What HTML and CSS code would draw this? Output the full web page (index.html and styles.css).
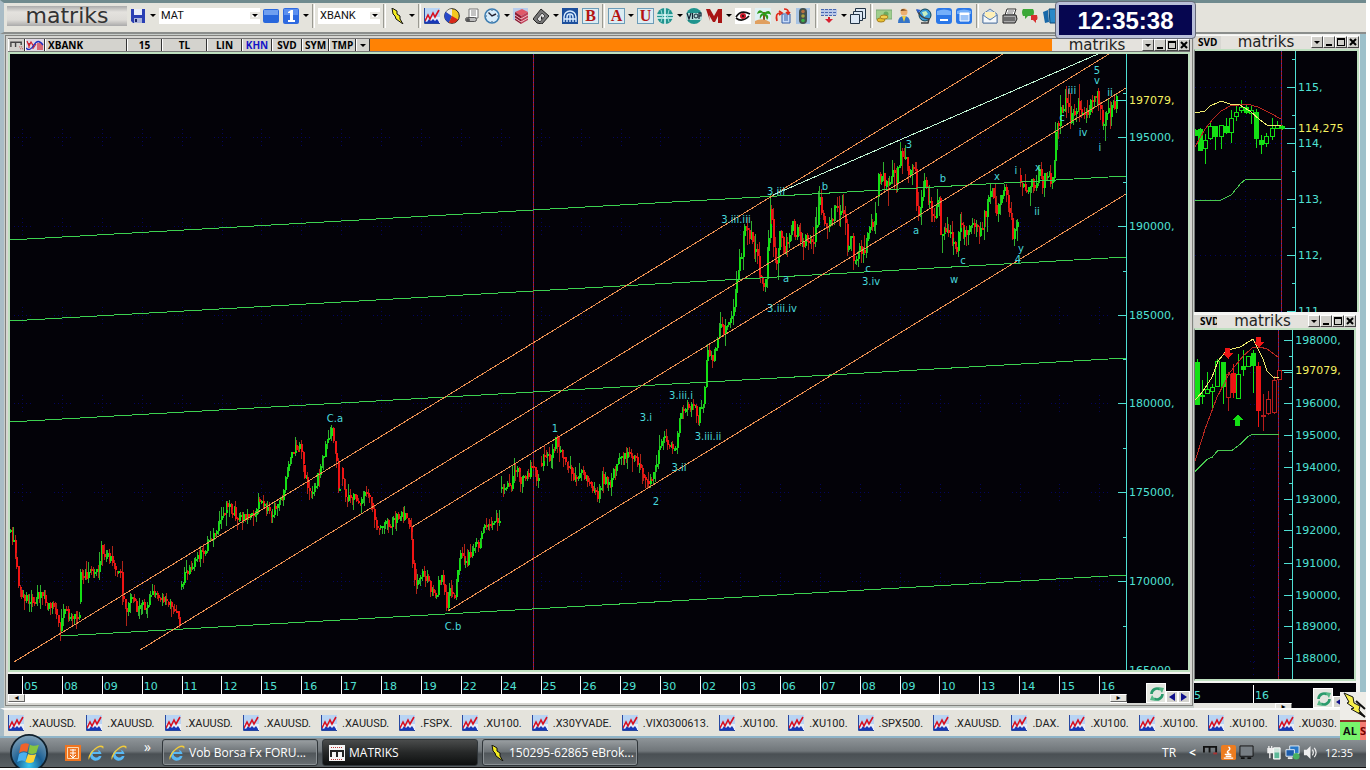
FILE: index.html
```html
<!DOCTYPE html>
<html lang="tr">
<head>
    <meta charset="UTF-8">
    <title>MATRIKS</title>
    <link rel="stylesheet" href="styles.css">
</head>
<body>

<!-- icon set -->
<svg class="defs" width="0" height="0">
    <symbol id="i-save" viewBox="0 0 16 16"><path d="M1 1h14v14H3l-2-2z" fill="#2a3fb4"/><path d="M4 1h8v6H4z" fill="#e8ecf8"/><path d="M4 10h8v5H4z" fill="#aab4dc"/><path d="M5 11h2v3H5z" fill="#1a2468"/></symbol>
    <symbol id="i-blue" viewBox="0 0 16 16"><rect y="1" width="16" height="14" rx="2" fill="#2867dc"/><path d="M1 2h14v5H1z" fill="#6f9ff0"/></symbol>
    <symbol id="i-one" viewBox="0 0 16 16"><rect width="16" height="16" rx="2" fill="#2f6ae0"/><path d="M1 1h14v6H1z" fill="#5c90f0"/><path d="M5 4l3-2h2v10h2v2H5v-2h2V5H5z" fill="#fff"/></symbol>
    <symbol id="i-bolt" viewBox="0 0 16 16"><path d="M3 0l5 3 0 3 3 2 0 3 3 5-7-5-1-3-2-2z" fill="#f4ec20" stroke="#111"/></symbol>
    <symbol id="i-chart" viewBox="0 0 16 16"><path d="M0 0h16v16H0z" fill="#b8d4f4"/><path d="M0 9h16v7H0z" fill="#e8eef8"/><path d="M1 16v-3l2 1 2-3 2 2 2-2 2 2 2-2 2 3v2z" fill="#1838b8"/><path d="M1 13l3-6 2 4 3-6 2 4 4-7" fill="none" stroke="#d81020" stroke-width="1.6"/><path d="M.5 0v15.5H16" fill="none" stroke="#2848a0"/></symbol>
    <symbol id="i-pie" viewBox="0 0 16 16"><circle cx="8" cy="8" r="7.3" fill="#f4c820" stroke="#222"/><path d="M8 8L2 3.500A7 7 0 0 0 5 14.500z" fill="#2848c8"/><path d="M8 8V1A7 7 0 0 0 2 4z" fill="#e8e8e8"/><path d="M8 8l-3 6.500a7 7 0 0 0 9-3z" fill="#d82818"/></symbol>
    <symbol id="i-fax" viewBox="0 0 16 16"><path d="M5 1h9v9H5z" fill="#fff" stroke="#777"/><path d="M7 3h5M7 5h5M7 7h5" stroke="#888"/><rect x="1.500" y="9.500" width="11" height="4" rx="2" fill="#bbb" stroke="#555"/><circle cx="4" cy="12" r="2" fill="#555"/></symbol>
    <symbol id="i-clock" viewBox="0 0 16 16"><circle cx="8" cy="8" r="7" fill="#d8ecfa" stroke="#3c7cb0" stroke-width="1.600"/><path d="M4.500 4.500L8 8l4-2" fill="none" stroke="#223" stroke-width="1.400"/><path d="M8 2v1M8 13v1M2 8h1M13 8h1" stroke="#357"/></symbol>
    <symbol id="i-books" viewBox="0 0 16 16"><path d="M0 0h15v12H0z" fill="#b8cdec"/><path d="M2 4l7-3 6 3-7 4z" fill="#e05868"/><path d="M2 4v8l6 4V8z" fill="#8a1830"/><path d="M8 8l7-4v8l-7 4z" fill="#c04058"/><path d="M2 7l6 4 7-4M2 10l6 4 7-4" fill="none" stroke="#f0c0c8"/></symbol>
    <symbol id="i-house" viewBox="0 0 16 16"><path d="M0 11L8 1l8 7-7 8-5-1z" fill="#777" stroke="#222"/><path d="M4 11l5-6 3 3-5 6z" fill="#ddd" stroke="#444"/><path d="M8 8l2 2-2 2z" fill="#222"/></symbol>
    <symbol id="i-arch" viewBox="0 0 16 16"><path d="M0 0h16v16H0z" fill="#1c4f9c"/><path d="M2 14V9a6 6 0 0 1 12 0v5M5 14V9a3 3 0 0 1 6 0v5M8 7v7M2 11h12" fill="none" stroke="#d8ecff" stroke-width="1.400"/></symbol>
    <symbol id="i-globe" viewBox="0 0 16 16"><circle cx="8" cy="8" r="8" fill="#1f948e"/><path d="M8 0v16M0 7h16M0 10h16" fill="none" stroke="#e4fafa" stroke-width="1.500"/><path d="M4 2q3 6 0 12M12 2q-3 6 0 12" fill="none" stroke="#9cdcd8"/></symbol>
    <symbol id="i-viop" viewBox="0 0 16 16"><circle cx="8" cy="8" r="8" fill="#1f948e"/><path d="M0 5h16v7H0z" fill="#b4dcd8"/><path d="M1 5l2 6 2-6M6.500 5v6M13 11V5h2v3h-2" fill="none" stroke="#123" stroke-width="1.200"/><circle cx="10" cy="8" r="2" fill="none" stroke="#123"/></symbol>
    <symbol id="i-m" viewBox="0 0 16 16"><path d="M0 1l4 0 4 7 4-7h4v14h-4V8l-3 6H7L3 7l1 6z" fill="#a81414"/></symbol>
    <symbol id="i-eye" viewBox="0 0 16 16"><path d="M0 0h16v16H0z" fill="#fff"/><path d="M1 9q5-8 14-3M1 10q6 5 13-2" fill="none" stroke="#111" stroke-width="1.700"/><circle cx="8" cy="8" r="3" fill="#c81828"/><circle cx="8" cy="8" r="1" fill="#111"/></symbol>
    <symbol id="i-palm" viewBox="0 0 16 16"><path d="M0 0h16v16H0z" fill="#dff0f4"/><path d="M9 4v8" stroke="#7c5020" stroke-width="2"/><path d="M9 5Q4-1 2 6q4-2 6-1-4 1-3 6 2-4 4-4 2 1 3 5 3-4-1-6 3-1 5 1Q15 0 9 5z" fill="#2c9a18"/><path d="M0 13q7-4 15 1v2H0z" fill="#e0a060"/></symbol>
    <symbol id="i-swap" viewBox="0 0 16 16"><path d="M7 6h8v9H7z" fill="#c8dcf8" stroke="#345fa8"/><path d="M9 8h4M9 10h4M9 12h4" stroke="#345fa8"/><path d="M2 13Q0 5 5 5M4 3l3 2-3 2M9 1q5 0 4 4M11 4l2 2 2-2" fill="none" stroke="#e02818" stroke-width="1.700"/></symbol>
    <symbol id="i-traffic" viewBox="0 0 16 16"><path d="M1 0h14v16H1z" fill="#a8c4e4"/><rect x="4" width="8" height="16" rx="4" fill="#44504c"/><circle cx="8" cy="3.500" r="1.800" fill="#b87040"/><circle cx="8" cy="8" r="1.800" fill="#a8a040"/><circle cx="8" cy="12.500" r="1.800" fill="#38b048"/></symbol>
    <symbol id="i-rows" viewBox="0 0 16 16"><path d="M0 1h16v6H0z" fill="#b8c8e8"/><path d="M0 1.500h16M0 4.500h16M0 7.500h16" stroke="#4a68b0" stroke-dasharray="3 1"/><path d="M7 9h2v2h3l-4 4-4-4h3z" fill="#d82030"/></symbol>
    <symbol id="i-stack" viewBox="0 0 16 16"><g fill="#dce8f4" stroke="#234"><path d="M5.500.5h10v10h-10z"/><path d="M3.500 3.500h9v9h-9z"/><path d="M.5 6.500h9v9h-9z"/></g></symbol>
    <symbol id="i-money" viewBox="0 0 16 16"><path d="M0 2h16v9H0z" fill="#9fce8c" stroke="#7aa878"/><circle cx="10" cy="6" r="2.500" fill="#6aaa60"/><ellipse cx="5" cy="12" rx="4" ry="2" fill="#e8c030" stroke="#a88020"/><ellipse cx="8" cy="9" rx="4" ry="2" fill="#f0d050" stroke="#a88020"/></symbol>
    <symbol id="i-user" viewBox="0 0 16 16"><circle cx="8" cy="4" r="3.500" fill="#eeb070"/><path d="M4.500 3q1-4 7 0l-2-.5z" fill="#7a4818"/><path d="M2 15q0-7 6-7t6 7z" fill="#3474c8"/><path d="M6 8l2 6 2-6z" fill="#f0d040"/></symbol>
    <symbol id="i-world" viewBox="0 0 16 16"><circle cx="9" cy="7" r="6" fill="#3a9ad8" stroke="#145"/><path d="M6 4l4-1 2 3-4 3z" fill="#c8f0c0"/><path d="M1 2q3 8 12 9l-1 4H5" fill="none" stroke="#444" stroke-width="1.500"/><path d="M0 1l5 1-3 3z" fill="#2b60d0"/></symbol>
    <symbol id="i-min" viewBox="0 0 16 16"><rect width="16" height="16" rx="3" fill="#2b78e8"/><path d="M1 3q7-3 14 0v4H1z" fill="#74b0fa"/><path d="M4 11h8v2H4z" fill="#fff"/></symbol>
    <symbol id="i-win" viewBox="0 0 16 16"><rect width="16" height="16" rx="3" fill="#2b78e8"/><path d="M1 3q7-3 14 0v3H1z" fill="#74b0fa"/><path d="M4 5h9v8H4z" fill="#9cc4f8" stroke="#fff"/><path d="M4 5h9v2H4z" fill="#fff"/></symbol>
    <symbol id="i-mail" viewBox="0 0 16 16"><path d="M1 6l7-5 7 5v9H1z" fill="#c8dcf0" stroke="#6080a8"/><path d="M3 4h10v6H3z" fill="#fff0b8"/><path d="M1 7l7 5 7-5v8H1z" fill="#f4f8fc" stroke="#6080a8"/></symbol>
    <symbol id="i-print" viewBox="0 0 16 16"><path d="M5 1h9l-2 6H3z" fill="#fff" stroke="#333"/><path d="M1 7h13l1 4-2 4H1z" fill="#aaa" stroke="#222"/><path d="M2 10h11M2 12h11" stroke="#333"/><path d="M6 3h6M5 5h6" stroke="#777"/></symbol>
    <symbol id="i-chat" viewBox="0 0 16 16"><path d="M1 1h10q2 3 0 7H6l-3 3V8H1q-2-4 0-7z" fill="#3ca838"/><path d="M9 7h6q1 3 0 5l-1 0 0 3-3-3H9z" fill="#d83030"/></symbol>
    <symbol id="i-book" viewBox="0 0 16 16"><path d="M1 4l5-2 1 12-4 1z" fill="#1868a8"/><path d="M7 1h9v14H8z" fill="#2a88c8" stroke="#0c4878"/></symbol>
    <symbol id="i-recycle" viewBox="0 0 16 16"><path d="M2.500 8A5.500 5.500 0 0 1 11 3.500M13.500 8A5.500 5.500 0 0 1 5 12.500" fill="none" stroke="#2a9a6c" stroke-width="2.600"/><path d="M9 1l6 1-2 5zM7 15l-6-1 2-5z" fill="#56b888"/></symbol>
    <symbol id="i-ie" viewBox="0 0 16 16"><path d="M13.500 9H4.500a3.600 3.600 0 0 0 6.500 2h2.500a5.800 5.800 0 1 1 0-2zM4.600 7h6a3 3 0 0 0-6 0z" fill="#58b8f4"/><path d="M1 15Q-1 12 4 6q7-7 11-5 1 1 0 3 0-2-3-2-4 1-8 6-3 5-3 7z" fill="#f4cc38"/></symbol>
    <symbol id="i-mm" viewBox="0 0 16 16"><path d="M0 0h16v16H0z" fill="#f4f4f4"/><path d="M2 12V6h12v6M8 6v6" fill="none" stroke="#222" stroke-width="2"/><path d="M2 2.500h12" stroke="#b33" stroke-dasharray="1 1"/><path d="M2 14.500h12" stroke="#b33" stroke-dasharray="1 1"/></symbol>
    <symbol id="i-mt" viewBox="0 0 16 12"><path d="M0 0h16v12H0z" fill="#d4d3ce"/><path d="M2 8V3h11v3M7 3v5" fill="none" stroke="#444" stroke-width="1.500"/><path d="M11 8h4M12 10h3" stroke="#b33" stroke-dasharray="1 1"/></symbol>
    <symbol id="i-wave" viewBox="0 0 18 12"><path d="M0 0h18v12H0z" fill="#e0d8e4"/><path d="M1 2l2 5 2-4 3 5 2-3M3 4v5M7 5v5M12 4v7M14 3v8M16 5v6" fill="none" stroke="#d02030" stroke-width="1.200"/><path d="M0 9q4 4 8-3t9 0" fill="none" stroke="#2030c0" stroke-width="1.300"/></symbol>
</svg>

<div class="app">
    <header class="toolbar">
        <span class="brand">matriks</span>
        <button class="tool"><svg><use href="#i-save"/></svg></button>
        <button class="drop"></button>
        <label class="combo combo-wide"><select aria-label="Sayfa"><option>MAT</option></select></label>
        <button class="tool"><svg><use href="#i-blue"/></svg></button>
        <button class="tool"><svg><use href="#i-one"/></svg></button>
        <button class="drop"></button>
        <i class="sep"></i>
        <label class="combo"><select aria-label="Sembol"><option>XBANK</option></select></label>
        <i class="sep"></i>
        <button class="tool"><svg><use href="#i-bolt"/></svg></button>
        <button class="drop"></button>
        <i class="sep"></i>
        <button class="tool"><svg><use href="#i-chart"/></svg></button>
        <button class="tool"><svg><use href="#i-pie"/></svg></button>
        <button class="tool"><svg><use href="#i-fax"/></svg></button>
        <button class="tool"><svg><use href="#i-clock"/></svg></button>
        <button class="drop"></button>
        <button class="tool"><svg><use href="#i-books"/></svg></button>
        <button class="tool"><svg><use href="#i-house"/></svg></button>
        <button class="drop"></button>
        <button class="tool"><svg><use href="#i-arch"/></svg></button>
        <button class="tool letter">B</button>
        <i class="sep"></i>
        <button class="tool letter">A</button>
        <button class="drop"></button>
        <button class="tool letter">U</button>
        <button class="tool"><svg><use href="#i-globe"/></svg></button>
        <button class="drop"></button>
        <button class="tool"><svg><use href="#i-viop"/></svg></button>
        <button class="tool"><svg><use href="#i-m"/></svg></button>
        <button class="drop"></button>
        <button class="tool"><svg><use href="#i-eye"/></svg></button>
        <button class="tool"><svg><use href="#i-palm"/></svg></button>
        <button class="tool"><svg><use href="#i-swap"/></svg></button>
        <button class="tool"><svg><use href="#i-traffic"/></svg></button>
        <i class="sep"></i>
        <button class="tool"><svg><use href="#i-rows"/></svg></button>
        <button class="drop"></button>
        <button class="tool"><svg><use href="#i-stack"/></svg></button>
        <i class="sep"></i>
        <button class="tool"><svg><use href="#i-money"/></svg></button>
        <button class="tool"><svg><use href="#i-user"/></svg></button>
        <button class="tool"><svg><use href="#i-world"/></svg></button>
        <button class="tool"><svg><use href="#i-min"/></svg></button>
        <button class="tool"><svg><use href="#i-win"/></svg></button>
        <i class="sep"></i>
        <button class="tool"><svg><use href="#i-mail"/></svg></button>
        <button class="tool"><svg><use href="#i-print"/></svg></button>
        <button class="tool"><svg><use href="#i-chat"/></svg></button>
        <button class="tool"><svg><use href="#i-book"/></svg></button>
    </header>
    <div class="clock">12:35:38</div>

    <main class="workspace">
        <section class="window main-window">
            <div class="titlebar orange">
                <button class="cell c-m"><svg><use href="#i-mt"/></svg></button>
                <button class="cell c-wave"><svg><use href="#i-wave"/></svg></button>
                <button class="cell c-name">XBANK</button>
                <button class="cell c-35">15</button>
                <button class="cell c-45">TL</button>
                <button class="cell c-35">LIN</button>
                <button class="cell c-30 on">KHN</button>
                <button class="cell c-30">SVD</button>
                <button class="cell c-27">SYM</button>
                <button class="cell c-27">TMP</button>
                <button class="cell c-arrow"><i class="tri"></i></button>
                <span class="brand-small">matriks</span>
                <span class="controls"><button><i class="tri"></i></button><button><i class="w-min"></i></button><button><i class="w-max"></i></button><button><svg viewBox="0 0 8 8"><path d="M1 1l6 6M7 1L1 7"/></svg></button></span>
            </div>
            <div class="plot"><svg id="main-chart" viewBox="10 54 1178 616" preserveAspectRatio="xMinYMin slice"></svg></div>
            <div class="bottom">
                <div class="days">
                    <span>05</span><span>08</span><span>09</span><span>10</span><span>11</span><span>12</span><span>15</span><span>16</span><span>17</span><span>18</span><span>19</span><span>22</span><span>24</span><span>25</span><span>26</span><span>29</span><span>30</span><span>02</span><span>03</span><span>06</span><span>07</span><span>08</span><span>09</span><span>10</span><span>13</span><span>14</span><span>15</span><span>16</span>
                </div>
                <div class="scroll"><button>◂</button><i class="thumb"></i><i class="track"></i><button>▸</button></div>
                <div class="nav">
                    <button class="refresh"><svg><use href="#i-recycle"/></svg></button><button class="step"><i class="left"></i></button><button class="step"><i class="right"></i></button>
                </div>
            </div>
        </section>

        <div class="side">
            <section class="window side-top">
                <div class="titlebar">
                    <span class="name">SVD</span>
                    <span class="brand-small">matriks</span>
                    <span class="controls"><button><i class="tri"></i></button><button><i class="w-min"></i></button><button><i class="w-max"></i></button><button><svg viewBox="0 0 8 8"><path d="M1 1l6 6M7 1L1 7"/></svg></button></span>
                </div>
                <div class="plot"><svg id="top-chart" viewBox="1195 51 162 261" preserveAspectRatio="xMinYMin slice"></svg></div>
            </section>
            <section class="window side-bottom">
                <div class="titlebar">
                    <span class="name cut">SVD</span>
                    <span class="brand-small">matriks</span>
                    <span class="controls"><button><i class="tri"></i></button><button><i class="w-min"></i></button><button><i class="w-max"></i></button><button><svg viewBox="0 0 8 8"><path d="M1 1l6 6M7 1L1 7"/></svg></button></span>
                </div>
                <div class="plot"><svg id="bottom-chart" viewBox="1195 331 159 348" preserveAspectRatio="xMinYMin slice"></svg></div>
                <div class="bottom">
                    <div class="days"><span class="part">5</span><span>16</span></div>
                    <div class="scroll"><i class="track"></i><button>▸</button></div>
                    <div class="nav"><button class="refresh"><svg><use href="#i-recycle"/></svg></button><button class="step"><i class="left"></i></button></div>
                </div>
            </section>
        </div>
    </main>

    <nav class="ticker">
        <button><svg><use href="#i-chart"/></svg>.XAUUSD.</button>
        <button><svg><use href="#i-chart"/></svg>.XAUUSD.</button>
        <button><svg><use href="#i-chart"/></svg>.XAUUSD.</button>
        <button><svg><use href="#i-chart"/></svg>.XAUUSD.</button>
        <button><svg><use href="#i-chart"/></svg>.XAUUSD.</button>
        <button><svg><use href="#i-chart"/></svg>.FSPX.</button>
        <button><svg><use href="#i-chart"/></svg>.XU100.</button>
        <button><svg><use href="#i-chart"/></svg>.X30YVADE.</button>
        <button><svg><use href="#i-chart"/></svg>.VIX0300613.</button>
        <button><svg><use href="#i-chart"/></svg>.XU100.</button>
        <button><svg><use href="#i-chart"/></svg>.XU100.</button>
        <button><svg><use href="#i-chart"/></svg>.SPX500.</button>
        <button><svg><use href="#i-chart"/></svg>.XAUUSD.</button>
        <button><svg><use href="#i-chart"/></svg>.DAX.</button>
        <button><svg><use href="#i-chart"/></svg>.XU100.</button>
        <button><svg><use href="#i-chart"/></svg>.XU100.</button>
        <button><svg><use href="#i-chart"/></svg>.XU100.</button>
        <button><svg><use href="#i-chart"/></svg>.XU030.</button>
    </nav>

    <footer class="taskbar">
        <button class="start" aria-label="Başlat">
            <svg viewBox="0 0 42 42">
                <defs><radialGradient id="orb" cx=".5" cy=".85" r=".8"><stop offset="0" stop-color="#38c8f0"/><stop offset=".45" stop-color="#1a5f94"/><stop offset="1" stop-color="#7a9cb4"/></radialGradient></defs>
                <circle cx="21" cy="21" r="20" fill="url(#orb)" stroke="#10202c" stroke-width="2"/>
                <path d="M12 12q4-3 9-1l-2 9q-5-2-9 1z" fill="#f0622c"/>
                <path d="M22 12q4 2 10 0l-3 9q-5 2-9 0z" fill="#86c440"/>
                <path d="M10 22q4-3 9-1l-2 9q-5-2-9 1z" fill="#4ab0f0"/>
                <path d="M20 22q4 2 9 0l-3 9q-4 2-9 0z" fill="#fcd438"/>
            </svg>
        </button>
        <div class="quick">
            <a href="#"><svg viewBox="0 0 16 16"><path d="M0 0h16v16H0z" fill="#ee7420"/><path d="M2.500 2.500h11v11h-11z" fill="none" stroke="#fbd8b0"/><path d="M5 5h6M5 8h6M8 4v8M5 10l3 3 3-3" fill="none" stroke="#fff"/></svg></a>
            <a href="#"><svg><use href="#i-ie"/></svg></a>
            <a href="#"><svg><use href="#i-ie"/></svg></a>
            <span class="more">»</span>
        </div>
        <button class="task"><svg><use href="#i-ie"/></svg>Vob Borsa Fx FORU...</button>
        <button class="task active"><svg><use href="#i-mm"/></svg>MATRIKS</button>
        <button class="task"><svg><use href="#i-bolt"/></svg>150295-62865 eBrok...</button>
        <div class="tray">
            <span class="lang">TR</span>
            <span class="chev">&lt;</span>
            <svg viewBox="0 0 16 16"><path d="M1 8V2h13v6M7 2v6" fill="none" stroke="#111" stroke-width="2"/><path d="M11 9h4" stroke="#a33" stroke-width="2"/></svg>
            <svg viewBox="0 0 16 16"><rect width="16" height="16" rx="2" fill="#ec7c20"/><path d="M8 2q3 2 0 4t1 3M4 10h7M5 12h6M3 14h10" fill="none" stroke="#fff" stroke-width="1.400"/></svg>
            <svg viewBox="0 0 16 16"><path d="M1 1h14v11H1z" fill="#777e84" stroke="#111"/><path d="M2 14h4M9 14h4" stroke="#111" stroke-width="2"/></svg>
            <svg class="gap" viewBox="0 0 16 16"><path d="M2 1v3M5 1v3M1 4h5v4H1zM3 8v6" fill="#eee" stroke="#eee" stroke-width="1.400"/><path d="M7 3h7v12H7z" fill="#cfe4dc" stroke="#fff"/><path d="M8 8h5v6H8z" fill="#5cb898"/></svg>
            <svg viewBox="0 0 16 16"><path d="M5 1h10v8H5z" fill="#2878c8" stroke="#e8f0f8"/><path d="M1 5h9v7H1z" fill="#1c5cac" stroke="#e8f0f8"/><path d="M3 14h5" stroke="#eee" stroke-width="2"/><circle cx="12" cy="12" r="3.500" fill="#48b060"/></svg>
            <svg viewBox="0 0 16 16"><path d="M1 5h3l4-4v14l-4-4H1z" fill="#eee"/><path d="M10 5q2 3 0 6M12 3q4 5 0 10" fill="none" stroke="#eee" stroke-width="1.300"/></svg>
            <time>12:35</time>
        </div>
    </footer>

    <div class="order">
        <div class="order-bolt"><svg viewBox="0 0 26 26"><path d="M4 1l9 4 1 6 6 3-1 4 6 7-14-8 3-1-7-5 2-1z" fill="#f6ef48" stroke="#111"/><path d="M16 9l9 8M19 20l6 5" stroke="#111" stroke-width="2"/></svg></div>
        <button class="buy">AL</button><button class="sell">S</button>
    </div>
</div>
<script src="chart.js"></script>
</body>
</html>
```
FILE: styles.css
```css
* {
    box-sizing: border-box;
}
html, body {
    margin: 0;
    padding: 0;
    height: 100%;
    background: #fff;
}
body {
    font-family: Roboto, "Liberation Sans", sans-serif;
    font-size: 11px;
    padding: 0 4px 2px 0;
    overflow: hidden;
}
button {
    border: 0;
    margin: 0;
    padding: 0;
    background: none;
    font: inherit;
    color: inherit;
    flex: none;
}
svg {
    display: block;
}
.defs {
    position: absolute;
}
.app {
    position: relative;
    display: flex;
    flex-direction: column;
    height: 100%;
    overflow: hidden;
    background: #e4e3dc;
}

/* toolbar */
.toolbar {
    display: flex;
    align-items: center;
    gap: 3px;
    height: 34px;
    padding: 0 0 4px 3px;
    flex: none;
    border-top: 3px solid #6f8a8e;
    border-bottom: 2px solid #8b8e8c;
}
.toolbar, .ticker {
    border-left: 4px solid #a9bcc6;
}
.brand {
    width: 120px;
    height: 20px;
    flex: none;
    font-family: "DejaVu Sans", sans-serif;
    font-size: 22px;
    line-height: 20px;
    text-align: center;
    color: #333;
    background: linear-gradient(#aaa, #e4e2de 30%, #dcdad6 70%, #aaa);
}
.tool {
    width: 17px;
    height: 16px;
}
.tool svg {
    width: 16px;
    height: 16px;
}
.letter {
    border: 1px solid #6c9cb8;
    background: #dcecf2;
    color: #b41414;
    font: bold 16px/14px "Liberation Serif", serif;
}
.drop, .tri {
    width: 6px;
    height: 3px;
    border: 3px solid transparent;
    border-top-color: #000;
    border-bottom: 0;
}
.tri {
    display: block;
}
.sep {
    width: 3px;
    height: 24px;
    flex: none;
    border-left: 1px solid #9a9a92;
    border-right: 1px solid #fff;
}
.combo {
    position: relative;
    width: 62px;
    height: 16px;
    flex: none;
    background: #fff;
}
.combo-wide {
    width: 101px;
}
.combo select {
    width: 100%;
    height: 16px;
    border: 0;
    padding: 0 2px;
    appearance: none;
    background: #fff;
    color: #111;
    font: inherit;
}
.combo::after {
    content: "";
    position: absolute;
    right: 2px;
    top: 6px;
    border: 3px solid transparent;
    border-top-color: #000;
    border-bottom: 0;
    outline: 2px solid #e8e7e2;
}
.clock {
    position: absolute;
    z-index: 3;
    right: 171px;
    top: 2px;
    width: 139px;
    height: 36px;
    border: 3px solid #b9bfd8;
    border-radius: 3px;
    outline: 1px solid #666a78;
    background: #060650;
    color: #fff;
    font: bold 24px/31px "Liberation Sans", sans-serif;
    text-align: center;
}

/* mdi windows */
.workspace {
    display: flex;
    flex: 1;
    min-height: 0;
    padding-left: 2px;
    gap: 2px;
    background: #c8cdca;
    border-left: 4px solid #a9bcc6;
    border-right: 6px solid #9cc0ca;
}
.window {
    display: flex;
    flex-direction: column;
    min-height: 0;
    background: #f4f4f2;
}
.main-window {
    flex: 1;
    min-width: 0;
    margin: 2px 0 3px;
    border: 2px solid #d6d6d2;
    outline: 1px solid #82827e;
}
.titlebar {
    display: flex;
    height: 14px;
    flex: none;
    background: #d8d7d2;
    font: bold 10px/12px "Open Sans", sans-serif;
    color: #000;
}
.orange {
    background: #ff8204;
    border-top: 1px solid #777;
    border-bottom: 1px solid #777;
}
.cell {
    height: 12px;
    background: #d4d3ce;
    border-right: 1px solid #333;
    border-left: 1px solid #fff;
}
.cell svg {
    width: 100%;
    height: 12px;
}
.c-m { width: 17px; }
.c-wave { width: 20px; }
.c-name {
    width: 82px;
    padding-left: 2px;
    text-align: left;
}
.c-35 { width: 35px; }
.c-45 { width: 45px; }
.c-30 { width: 30px; }
.c-27 { width: 27px; }
.c-arrow { width: 14px; }
.c-arrow .tri { margin: 0 auto; }
.on { color: #1414c8; }
.brand-small {
    width: 90px;
    margin-left: auto;
    background: #e4e2dd;
    font: 15px/12px "DejaVu Sans", sans-serif;
    text-align: center;
    color: #222;
}
.controls {
    display: flex;
    flex: none;
    background: #d4d3ce;
}
.controls button {
    display: flex;
    align-items: center;
    justify-content: center;
    width: 12px;
    height: 12px;
    background: #d0cfca;
    border: 1px solid #fff;
    border-right-color: #444;
    border-bottom-color: #444;
}
.controls svg {
    width: 8px;
    height: 8px;
    stroke: #000;
    stroke-width: 2;
}
.w-min {
    width: 6px;
    height: 2px;
    margin-top: 6px;
    background: #000;
}
.w-max {
    width: 8px;
    height: 8px;
    border: 1px solid #000;
    border-top-width: 2px;
}
.plot {
    flex: 1;
    min-height: 0;
    border: 2px solid #bfe0c0;
    background: #030208;
}
.plot svg {
    width: 100%;
    height: 100%;
    shape-rendering: crispEdges;
}
.plot text {
    font: 11px "DejaVu Sans", sans-serif;
    fill: #4fe0d4;
}
.plot text.note {
    font-size: 10px;
    text-anchor: middle;
    fill: #48d8dc;
}
.plot text.price {
    fill: #f4f060;
}
.bottom {
    display: grid;
    grid-template-columns: 1fr 63px;
    grid-template-rows: 20px 9px;
    margin-top: 2px;
    background: #030208;
}
.days {
    display: grid;
    grid-template-columns: repeat(27, 1fr) 28px;
    padding: 2px 0 0 14px;
    font: 11px/22px "DejaVu Sans", sans-serif;
    color: #4fe0d4;
}
.days span {
    height: 18px;
    padding-left: 1px;
    border-left: 1px solid #fff;
}
.scroll {
    display: flex;
    grid-row: 2;
    background: #fff;
}
.scroll button {
    width: 17px;
    height: 8px;
    background: #e4e3de;
    border: 1px solid #fff;
    border-right-color: #666;
    border-bottom-color: #666;
    font: 8px/6px "DejaVu Sans", sans-serif;
}
.thumb {
    flex: 1;
}
.track {
    width: 170px;
    background: #e6e5e0;
}
.nav {
    display: flex;
    align-items: flex-end;
    justify-content: flex-end;
    grid-column: 2;
    grid-row: 1 / 3;
}
.refresh {
    width: 20px;
    height: 20px;
    padding: 2px;
    background: #e4e6e0;
    border: 1px solid #fff;
}
.refresh svg {
    width: 16px;
    height: 16px;
}
.step {
    width: 12px;
    height: 12px;
    background: #d4d3ce;
    border: 1px solid #fff;
}
.step i {
    display: block;
    width: 6px;
    margin: 0 auto;
    border: 4px solid transparent;
}
.step .left {
    border-right: 6px solid #10108c;
    border-left: 0;
}
.step .right {
    border-left: 6px solid #10108c;
    border-right: 0;
}
.side {
    display: flex;
    flex-direction: column;
    width: 166px;
    padding-top: 1px;
    background: #f0f0ee;
}
.side .titlebar {
    border-top: 1px solid #f8f8f6;
}
.side .plot {
    border-left: 1px solid #777;
}
.side .name {
    width: 27px;
    padding-left: 4px;
    overflow: hidden;
}
.side .cut {
    width: 23px;
    padding-left: 6px;
}
.side .brand-small {
    flex: 1;
    margin: 0;
}
.side-top {
    flex: 278 0 0;
    padding-right: 1px;
}
.side-top .plot {
    border-bottom: 0;
}
.side-bottom {
    flex: 395 0 0;
    padding: 2px 4px 0 0;
}
.side-bottom .bottom {
    grid-template-columns: 98px 1fr;
    grid-template-rows: 20px 5px;
    overflow: hidden;
}
.side-bottom .days {
    grid-template-columns: 59px 1fr;
    padding-left: 0;
}
.side-bottom .part {
    border: 0;
    padding-left: 0;
}
.side-bottom .track {
    flex: 1;
}
.side-bottom .nav {
    justify-content: flex-start;
    padding-left: 21px;
}

/* symbol strip */
.ticker {
    display: flex;
    align-items: center;
    gap: 10px;
    height: 28px;
    flex: none;
    padding-left: 4px;
    border-top: 2px solid #fafafa;
    color: #222;
    overflow: hidden;
}
.ticker button {
    display: flex;
    align-items: center;
    gap: 5px;
}
.ticker svg {
    width: 16px;
    height: 16px;
}

/* windows taskbar */
.taskbar {
    display: flex;
    align-items: center;
    height: 32px;
    flex: none;
    border-top: 2px solid #8fb4c8;
    border-bottom: 1px solid #111;
    background: linear-gradient(#8e9498, #70767a 45%, #4a5054 55%, #596064);
    color: #fff;
    font: 12px "Open Sans", "Noto Sans", sans-serif;
}
.start {
    width: 42px;
    height: 38px;
    margin-left: 8px;
}
.start svg {
    width: 42px;
    height: 38px;
}
.quick {
    display: flex;
    gap: 7px;
    width: 112px;
    padding-left: 15px;
}
.quick svg, .task svg {
    width: 16px;
    height: 16px;
    flex: none;
}
.more {
    margin-left: 10px;
    font-size: 14px;
    line-height: 4px;
}
.task {
    display: flex;
    align-items: center;
    gap: 4px;
    width: 156px;
    height: 27px;
    margin-right: 4px;
    padding: 0 6px;
    border: 1px solid #30363a;
    border-radius: 3px;
    background: linear-gradient(#9a9fa2, #6c7276 48%, #50565a 52%, #6a7074);
    box-shadow: inset 0 0 0 1px #8a9094;
    white-space: nowrap;
}
.active {
    background: linear-gradient(#4a4c4c, #262828 50%, #0e1010);
    box-shadow: none;
}
.tray {
    display: flex;
    align-items: center;
    gap: 3px;
    margin-left: auto;
    padding-right: 13px;
}
.tray svg {
    width: 15px;
    height: 15px;
}
.tray .gap {
    margin-left: 10px;
}
.lang {
    margin-right: 10px;
}
.chev {
    margin-right: 4px;
    font-weight: bold;
}
.tray time {
    margin-left: 4px;
    font-size: 11px;
}

/* order box over the lower right corner */
.order {
    position: absolute;
    z-index: 4;
    right: 0;
    bottom: 28px;
    width: 26px;
    height: 48px;
    overflow: hidden;
    white-space: nowrap;
    font: bold 11px/18px "Open Sans", sans-serif;
    color: #111;
}
.order-bolt {
    height: 30px;
    background: #eeede8;
    border-bottom: 2px solid #8c3028;
}
.order-bolt svg {
    width: 26px;
    height: 26px;
}
.buy {
    width: 20px;
    height: 18px;
    background: #78f46c;
}
.sell {
    width: 14px;
    height: 18px;
    background: #f47c74;
    color: #700;
    text-align: left;
}
```
FILE: chart.js
```js
var NS = "http://www.w3.org/2000/svg";
var GREEN = "#14e014", RED = "#f01414", CYAN = "#4fe0d4";

function add(svg, name, attrs, text) {
    var el = document.createElementNS(NS, name);
    for (var k in attrs) el.setAttribute(k, attrs[k]);
    if (text) el.textContent = text;
    svg.appendChild(el);
    return el;
}
function line(svg, x1, y1, x2, y2, color, dash) {
    add(svg, "line", {x1: x1, y1: y1, x2: x2, y2: y2, stroke: color, "stroke-dasharray": dash || "none"});
}
function curve(svg, points, color) {
    add(svg, "polyline", {points: points, fill: "none", stroke: color});
}
// session marker, red with blue dots
function marker(svg, x, top, bottom) {
    add(svg, "rect", {x: x, y: top, width: 1, height: bottom - top, fill: "#a81c2c"});
    for (var y = top; y < bottom; y += 4) {
        add(svg, "rect", {x: x, y: y, width: 1, height: 1, fill: "#3c30c0"});
    }
}

// same series on every load
var seed = 77;
function rnd() {
    seed = (seed * 16807) % 2147483647;
    return seed / 2147483647;
}

// price axis: vertical line, major ticks with labels, minor ticks half way
function axis(svg, x, top, bottom, first, step, labels) {
    add(svg, "rect", {x: x, y: top, width: 1, height: bottom - top, fill: CYAN});
    for (var i = 0; i < labels.length; i++) {
        var y = Math.round(first + i * step);
        add(svg, "rect", {x: x - 8, y: y, width: 8, height: 1, fill: CYAN});
        add(svg, "rect", {x: x - 3, y: Math.round(y - step / 2), width: 3, height: 1, fill: CYAN});
        if (labels[i]) add(svg, "text", {x: x + 3, y: y + 4}, labels[i]);
    }
}
function price(svg, x, y, label) {
    add(svg, "rect", {x: x - 10, y: y, width: 10, height: 1, fill: CYAN});
    add(svg, "text", {x: x + 3, y: y + 4, "class": "price"}, label);
}

function drawMain() {
    var svg = document.getElementById("main-chart");
    var i, j, k;
    for (i = 0; i < 28; i++) {
        for (j = 0; j < 6; j++) {
            var gx = Math.round(22 + i * 39.9) + 0.5, gy = Math.round(137 + j * 88.8) + 0.5;
            line(svg, gx - 9, gy, gx + 9, gy, "#04045c", "1 3");
            line(svg, gx, gy - 9, gx, gy + 9, "#04045c", "1 3");
        }
    }
    marker(svg, 533, 54, 670);

    var runs = [
        [10,532,15,540,17,560,20,590,23,600,28,600,35,602,39,592,45,600,50,608,55,604,57,612,60,622,61,632,64,615,67,612,72,618,79,619],
        [80,602,81,575,88,575,94,573,99,570,102,548,106,555,112,560,118,568,122,570,123,592,128,610,131,598,135,600,138,608,142,602,148,608,154,590,160,595,165,602,172,602,176,612,180,622],
        [181,587,187,572,193,565,200,555,208,545,215,533,220,525,223,511,228,507,236,512,241,520,250,515,257,515,260,501,266,505,272,516,283,497,287,480,293,453,300,444,302,448,305,473,313,494,320,473,325,452,333,432,337,453,340,493],
        [342,468,348,498,357,495,360,506,368,493,373,507,380,532,383,523,392,524,400,515,408,517,412,530,413,557,417,590,422,572,430,583,436,598,442,575,445,583,448,607,451,592,456,600,458,570,463,553,468,562,475,543,480,547,483,527,487,530,495,518,500,519],
        [501,487,512,487,517,468,522,482,528,477,534,465,538,480],
        [541,463,547,455,552,457,557,442,562,453,570,463,575,483,582,467,585,478,593,487,598,497,603,478,612,485,615,468,621,460,630,455,637,460,642,473,647,482,649,485,655,473,662,445,664,437,670,447,677,448,680,418,684,407,692,408,697,410,699,421,701,412,705,397,707,370,708,352,712,360,716,352,720,323,725,332,730,320,735,307,738,280,742,253,747,227,752,237,758,257,763,281,766,285,768,257,772,202,774,240,777,270,781,237,787,250,793,227,803,240,813,243,817,227,821,197,823,210,829,225,838,205,842,213,846,213,848,250,852,233,856,267,860,247,867,250,872,223,877,217],
        [878,197,880,177,887,182,895,173,898,177,903,150,908,167,914,175,917,172,918,207,921,215,925,180,928,197,935,220,940,197,942,233,947,227,953,237,957,253,960,227,967,235,975,227,981,233,987,210,993,190,998,213,1004,187,1012,213,1013,240,1018,217],
        [1020,175,1023,188,1032,183,1035,193,1040,165,1043,182,1052,178,1054,176,1057,133,1062,112,1065,102,1072,117,1080,107,1087,115,1093,100,1097,94,1101,100,1105,130,1110,113,1116,102]
    ];
    runs.forEach(function (r) {
        k = 0;
        var prev = r[1];
        for (var x = r[0]; x <= r[r.length - 2]; x += 1.6) {
            while (k < r.length - 4 && r[k + 2] < x + 1.6) k += 2;
            var t = Math.min(1, Math.max(0, (x + 1.6 - r[k]) / (r[k + 2] - r[k])));
            // the later half of the month trades in a wider range
            var range = x > 740 ? 15 : 10;
            var close = r[k + 1] + (r[k + 3] - r[k + 1]) * t + (rnd() - 0.5) * range;
            var hi = Math.min(prev, close) - rnd() * rnd() * range * 1.3;
            var lo = Math.max(prev, close) + rnd() * rnd() * range * 1.3;
            var up = close < prev;
            var px = Math.round(x);
            add(svg, "rect", {x: px, y: Math.round(hi), width: 1, height: Math.round(lo - hi) + 1, fill: up ? "#2fb02f" : "#b02418"});
            add(svg, "rect", {x: px, y: Math.round(Math.min(prev, close)), width: 2, height: Math.max(2, Math.round(Math.abs(prev - close))), fill: up ? GREEN : RED});
            prev = close;
        }
    });

    // channels
    var g = "#3cd050", o = "#ec9050";
    line(svg, 10, 240, 1126, 176, g);
    line(svg, 10, 321, 1126, 257, g);
    line(svg, 10, 422, 1126, 358, g);
    line(svg, 61, 636, 1126, 575, g);
    line(svg, 14, 662, 1003, 54, o);
    line(svg, 140, 650, 1109, 54, o);
    line(svg, 412, 527, 1126, 88, o);
    line(svg, 448, 611, 1126, 194, o);
    line(svg, 773, 195, 1098, 54, "#c0f4d4");

    // wave counts
    var notes = [
        [335,422,"C.a"], [453,630,"C.b"], [555,432,"1"], [656,505,"2"], [646,421,"3.i"], [679,471,"3.ii"],
        [681,399,"3.iii.i"], [708,440,"3.iii.ii"], [736,223,"3.iii.iii"], [776,195,"3.iii"], [782,312,"3.iii.iv"],
        [786,282,"a"], [825,190,"b"], [868,272,"c"], [871,285,"3.iv"], [909,148,"3"], [916,234,"a"], [943,182,"b"],
        [963,264,"c"], [954,283,"w"], [997,180,"x"], [1016,174,"i"], [1021,252,"y"], [1018,263,"4"], [1037,215,"ii"],
        [1038,171,"x"], [1062,121,"c"], [1072,94,"iii"], [1083,136,"iv"], [1097,74,"5"], [1097,84,"v"], [1110,96,"ii"], [1100,151,"i"]
    ];
    notes.forEach(function (n) {
        add(svg, "text", {x: n[0], y: n[1], "class": "note"}, n[2]);
    });

    axis(svg, 1126, 54, 670, 137, 88.8, ["195000,", "190000,", "185000,", "180000,", "175000,", "170000,", "165000,"]);
    price(svg, 1126, 100, "197079,");
}

// rows are high, low, body top, body bottom, filled, red
function candles(svg, x0, rows) {
    rows.forEach(function (r, i) {
        var x = Math.round(x0 + i * 5.1);
        var color = r[5] ? (r[4] ? RED : "#b81c1c") : GREEN;
        add(svg, "rect", {x: x, y: r[0], width: 1, height: r[1] - r[0], fill: color});
        add(svg, "rect", {x: x - 1.5, y: r[2] + 0.5, width: 4, height: Math.max(1, r[3] - r[2] - 1), fill: r[4] ? color : "#030208", stroke: color});
    });
}

function drawTop() {
    var svg = document.getElementById("top-chart");
    [87, 143, 199, 255].forEach(function (y) {
        line(svg, 1195, y + 0.5, 1281, y + 0.5, "#04045c", "1 4");
    });
    line(svg, 1245.5, 81, 1245.5, 290, "#04045c", "1 4");
    marker(svg, 1281, 51, 312);
    candles(svg, 1195, [
        [129,136,130,136,1], [128,151,129,151,1], [134,164,140,149,0], [122,140,126,139,0], [126,150,126,137,1],
        [125,149,125,137,0], [118,134,126,133,1], [110,143,118,133,0], [106,121,112,117,0], [100,113,107,111,0],
        [104,114,107,113,1], [106,124,110,114,0], [109,148,112,139,1], [135,154,140,145,1], [133,147,136,144,0],
        [118,140,128,137,0], [121,129,125,129,0], [125,130,126,129,1]
    ]);
    curve(svg, "1195,147 1205,129 1213,119 1221,111 1230,106 1247,104 1258,107 1270,113 1281,119", "#b82820");
    curve(svg, "1195,113 1205,111 1210,106 1221,101 1230,104 1240,105 1250,111 1260,120 1267,125 1281,125", "#f0ec70");
    curve(svg, "1195,200 1221,200 1231,195 1241,183 1246,179 1281,179", "#48c850");
    axis(svg, 1295, 51, 312, 87, 56, ["115,", "114,", "113,", "112,", "111,"]);
    price(svg, 1295, 128, "114,275");
}

function drawBottom() {
    var svg = document.getElementById("bottom-chart");
    for (var i = 0; i < 11; i++) {
        line(svg, 1250, 341.5 + i * 32, 1258, 341.5 + i * 32, "#04045c", "1 3");
    }
    line(svg, 1253.5, 440, 1253.5, 679, "#04045c", "1 5");
    marker(svg, 1278, 331, 679);
    candles(svg, 1197, [
        [360,406,363,406,1], [381,405,396,398,0], [373,395,390,395,0], [385,409,388,393,0], [360,388,362,388,0],
        [363,405,363,388,1], [373,412,375,399,0,1], [365,399,374,394,1,1], [355,400,375,400,0], [351,377,367,371,1],
        [357,368,357,368,0], [351,394,354,367,1], [363,428,367,412,1,1], [395,432,416,418,0,1], [392,416,400,415,0,1],
        [377,415,381,414,0,1], [371,381,371,381,0,1]
    ]);
    curve(svg, "1195,462 1205,430 1217,398 1230,373 1243,357 1252,349 1260,348 1267,350 1279,359", "#b82820");
    curve(svg, "1195,401 1203,392 1212,378 1218,362 1227,351 1240,348 1248,343 1253,340 1257,348 1263,360 1267,372 1273,378 1279,379", "#f0ec70");
    curve(svg, "1195,472 1207,460 1212,458 1218,451 1232,451 1240,445 1248,437 1253,435 1279,435", "#48c850");
    add(svg, "path", {d: "M1225 349h5v5h3l-5 6-5-6h2z", fill: RED});
    add(svg, "path", {d: "M1256 338h5v5h3l-5 6-5-6h2z", fill: RED});
    add(svg, "path", {d: "M1235 427h5v-6h3l-5-6-6 6h3z", fill: GREEN});
    axis(svg, 1292, 331, 679, 341, 31.7, ["198000,", "", "196000,", "195000,", "194000,", "193000,", "192000,", "191000,", "190000,", "189000,", "188000,"]);
    price(svg, 1292, 371, "197079,");
}

drawMain();
drawTop();
drawBottom();
```
